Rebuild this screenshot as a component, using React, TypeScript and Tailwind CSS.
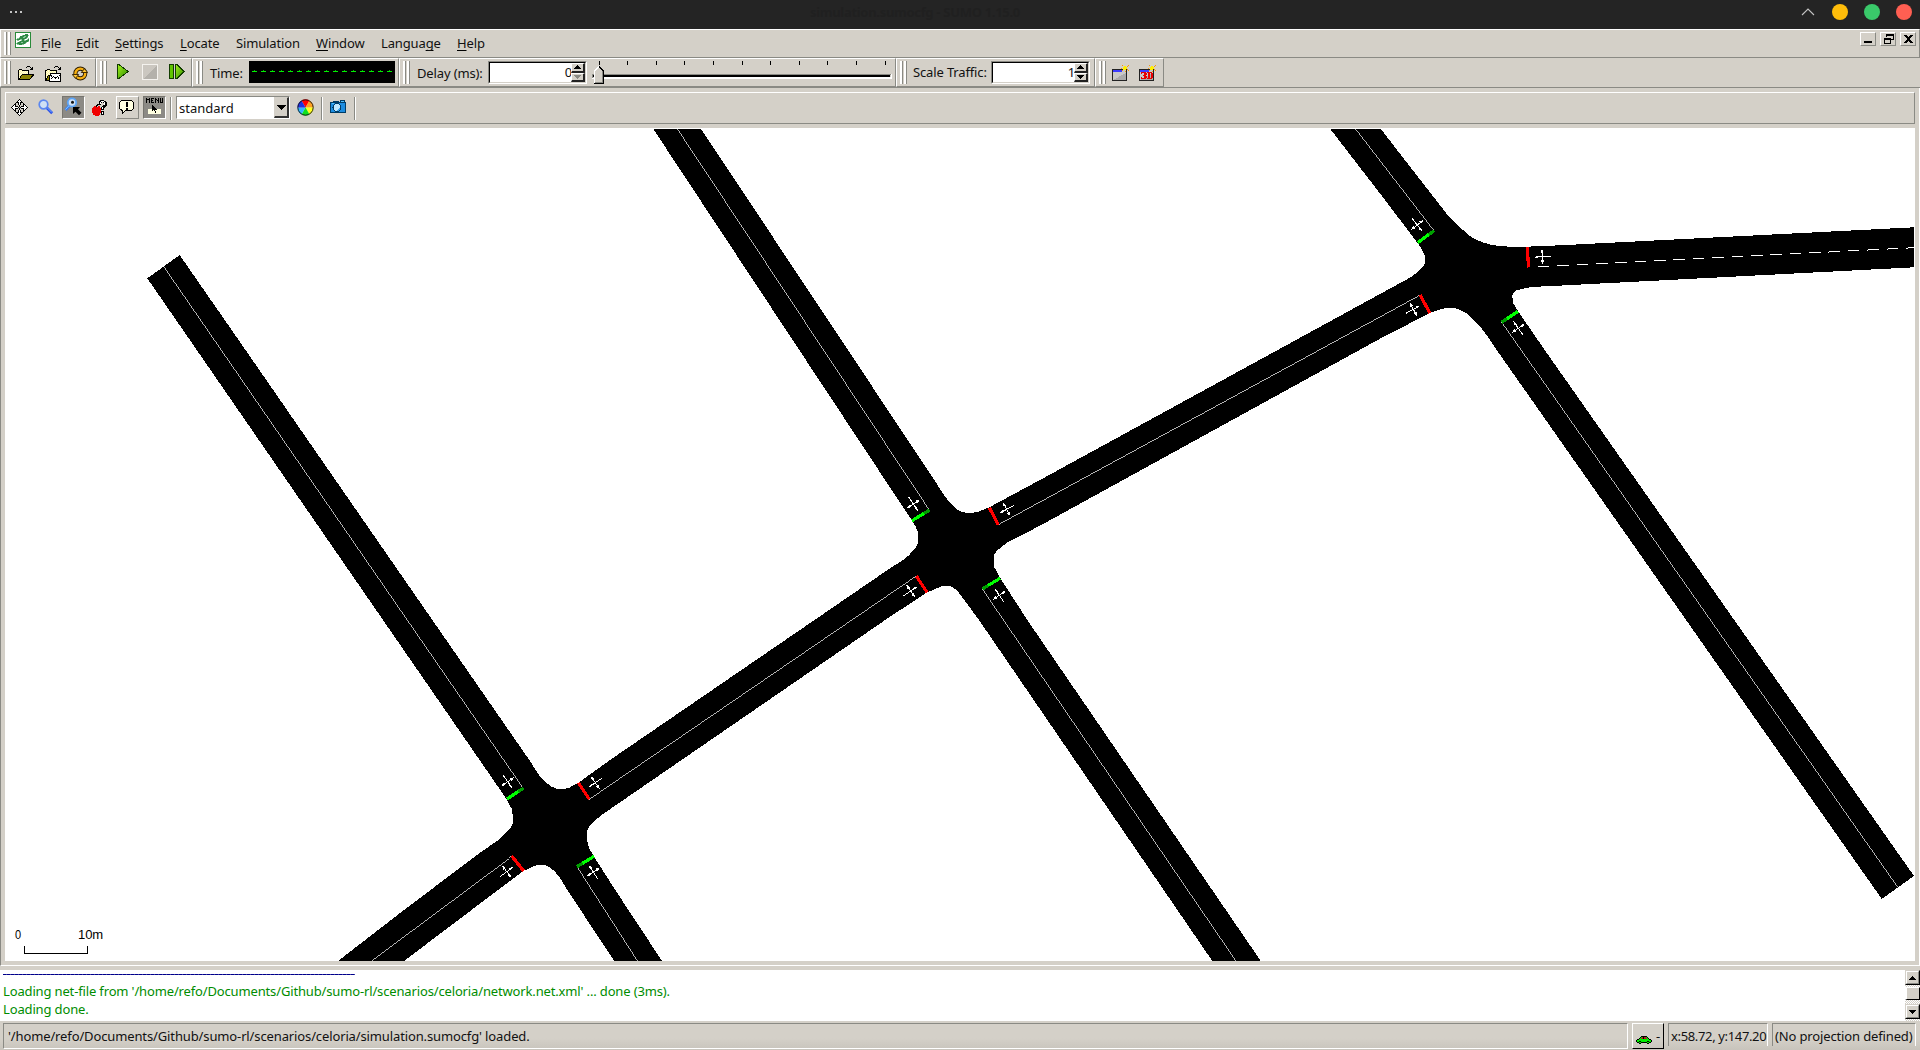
import React from "react";

type Pt = [number, number];

function Grip() {
  return (
    <div className="mt-[2px] ml-[3px] flex h-[23px] shrink-0 gap-[1px] self-start">
      <div className="w-[3px] border-l-2 border-r border-l-white border-r-[#8a8a84]" />
      <div className="w-[3px] border-l-2 border-r border-l-white border-r-[#8a8a84]" />
    </div>
  );
}

function Dock({ className, children }: { className: string; children: React.ReactNode }) {
  return (
    <div
      className={
        "flex h-[29px] shrink-0 border-t border-r border-b border-l border-t-white border-r-[#8a8a84] border-b-[#8a8a84] border-l-white " +
        className
      }
    >
      <Grip />
      {children}
    </div>
  );
}

function Icon({ className, children, w = 16, h = 16 }: { className?: string; children: React.ReactNode; w?: number; h?: number }) {
  return (
    <svg
      width={w}
      height={h}
      viewBox={`0 0 ${w} ${h}`}
      shapeRendering="crispEdges"
      className={"block shrink-0 " + (className ?? "")}
    >
      {children}
    </svg>
  );
}

function Pixels({ rows, colors }: { rows: string[]; colors: Record<string, string> }) {
  const out: React.ReactNode[] = [];
  rows.forEach((r, y) => {
    let x = 0;
    while (x < r.length) {
      const c = r[x];
      let n = 1;
      while (x + n < r.length && r[x + n] === c) n++;
      if (colors[c]) out.push(<rect key={`${x}-${y}`} x={x} y={y} width={n} height={1} fill={colors[c]} />);
      x += n;
    }
  });
  return <>{out}</>;
}

const folderColors = { k: "#000", y: "#fdf6a0", w: "#fffde0", o: "#8a8200" };

function OpenIcon() {
  return (
    <Icon>
      <Pixels
        colors={folderColors}
        rows={[
          ".........kkk....",
          "........k...k.k.",
          ".............kk.",
          ".kkk........kkk.",
          "kywykkkkkkk.....",
          "kwywywywywk.....",
          "kywywywywyk.....",
          "kwywywywywk.....",
          "kywykkkkkkkkkkkk",
          "kwykooooooooookk",
          "kykooooooooookk.",
          "kwkooooooooook..",
          "kkooooooooook...",
          "kkkkkkkkkkkk....",
        ]}
      />
    </Icon>
  );
}

function OpenNetIcon() {
  return (
    <Icon>
      <Pixels
        colors={{ ...folderColors, x: "#fff" }}
        rows={[
          "..........kkk...",
          ".........k...k.k",
          "..............kk",
          "..kkk........kkk",
          "kkywykkkkkkk....",
          "kwywywywywyk....",
          "kywywywywywk....",
          "kwywykkkkkkkkkkk",
          "kywywkxxxxxxxxxk",
          "kwykkkkxxxxxxxkk",
          "kykokxkxkxxxkxxk",
          "kwkokxxkxkkkxkxk",
          "kkookxkxxxkxxkxk",
          "kkookxxxxxxxxxxk",
          "kkkkkxxxxxxxxxxk",
          "....kkkkkkkkkkkk",
        ]}
      />
    </Icon>
  );
}

function ReloadIcon() {
  return (
    <svg width="16" height="16" viewBox="0 0 16 16" className="block shrink-0">
      <circle cx="8.300" cy="7.500" r="4.900" fill="none" stroke="#2c1c00" strokeWidth="4.200" />
      <circle cx="8.300" cy="7.500" r="4.900" fill="none" stroke="#f8b010" strokeWidth="2.400" />
      <path d="M0.300 8.500H6.700L3.500 12.300z" fill="#ffc838" stroke="#2c1c00" strokeWidth="0.900" />
      <path d="M9.300 6.500H15.700L12.500 2.700z" fill="#ffc838" stroke="#2c1c00" strokeWidth="0.900" />
    </svg>
  );
}

function PlayIcon() {
  return (
    <Icon w={12} h={16}>
      <defs>
        <linearGradient id="gplay" x1="0" y1="0" x2="1" y2="1">
          <stop offset="0" stopColor="#a4f41c" />
          <stop offset="1" stopColor="#2c8a00" />
        </linearGradient>
      </defs>
      <path d="M0.5 0.5 L2 0.5 L11 7.5 L2 14.5 L0.5 14.5z" fill="url(#gplay)" stroke="#123c00" />
    </Icon>
  );
}

function StepIcon() {
  return (
    <Icon>
      <path d="M0.5 0.5h4v14h-4z" fill="#5fc400" stroke="#123c00" />
      <path d="M6.5 0.5 L8 0.5 L15 7.5 L8 14.5 L6.5 14.5z" fill="url(#gplay)" stroke="#123c00" />
    </Icon>
  );
}

function StopIcon() {
  return (
    <Icon>
      <rect width="16" height="16" fill="#f4f2ee" />
      <rect x="1" y="1" width="14" height="14" fill="#b4b1ab" />
      <path d="M15 1L1 15V1z" fill="#cbc7c0" />
    </Icon>
  );
}

function WindowIcon({ three }: { three?: boolean }) {
  return (
    <Icon w={17} h={16}>
      <rect x="0" y="4" width="15" height="12" fill="#222" />
      <rect x="1" y="5" width="13" height="10" fill="#c8c8c8" />
      <rect x="1" y="5" width="9" height="2" fill="#3b3bff" />
      <path d="M1 15h13V8z" fill="#aaa" />
      {three && (
        <g transform="translate(2 7)">
          <Pixels
            colors={{ r: "#e80000" }}
            rows={["rrrrr.rrrrr", "r..rrr.rr.rr", "...rrr.rr.rr", "..rrr..rr.rr", "...rrr.rr.rr", "r..rrr.rr.rr", "rrrrr.rrrrr"]}
          />
        </g>
      )}
      <path d="M12 1h2v1h1v2h-1v1h-3V2h1z" fill="#ffee00" />
      <path d="M10 0h1v1h-1zM15 1h1v1h-1zM16 0h1v1h-1zM9 3h1v1H9zM15 4h1v1h-1zM13 6h1v1h-1zM16 5h1v1h-1zM10 5h1v1h-1z" fill="#ff9a00" />
    </Icon>
  );
}

function SpinArrow({ up, disabled }: { up?: boolean; disabled?: boolean }) {
  return (
    <div className="flex h-[10px] w-[14px] items-center justify-center border-t border-r-2 border-b-2 border-l border-t-white border-r-[#222] border-b-[#222] border-l-white bg-[#d4d0c8]">
      <svg width="7" height="4" viewBox="0 0 7 4" shapeRendering="crispEdges">
        <path d={up ? "M3 0h1v1h1v1h1v1h1v1H0V3h1V2h1V1h1z" : "M0 0h7v1H6v1H5v1H4v1H3V3H2V2H1V1H0z"} fill={disabled ? "#8a8a84" : "#000"} />
      </svg>
    </div>
  );
}

function Spinner({ value, disabledDown }: { value: string; disabledDown?: boolean }) {
  return (
    <div className="mt-[2px] flex h-[23px] w-[99px] shrink-0 border-t border-r border-b border-l border-t-[#8a8a84] border-r-white border-b-white border-l-[#8a8a84]">
      <div className="flex flex-1 border-t border-r border-b border-l border-t-black border-r-[#d4d0c8] border-b-[#d4d0c8] border-l-black bg-white">
        <div className="-mr-px flex-1 text-right leading-[19px]">{value}</div>
        <div className="flex flex-col">
          <SpinArrow up />
          <SpinArrow disabled={disabledDown} />
        </div>
      </div>
    </div>
  );
}

function Separator({ className }: { className: string }) {
  return <div className={"mt-[4px] h-[23px] w-[2px] shrink-0 border-r border-l border-r-white border-l-[#8a8a84] " + className} />;
}

const menus: { name: string; key: number; w: string }[] = [
  { name: "File", key: 0, w: "w-[35px]" },
  { name: "Edit", key: 0, w: "w-[39px]" },
  { name: "Settings", key: 0, w: "w-[65px]" },
  { name: "Locate", key: 0, w: "w-[56px]" },
  { name: "Simulation", key: -1, w: "w-[80px]" },
  { name: "Window", key: 0, w: "w-[65px]" },
  { name: "Language", key: 6, w: "w-[76px]" },
  { name: "Help", key: 0, w: "w-[40px]" },
];

function MenuLabel({ name, k }: { name: string; k: number }) {
  if (k < 0) return <>{name}</>;
  return (
    <>
      {name.slice(0, k)}
      <span className="underline decoration-black decoration-1 underline-offset-2 [text-decoration-skip-ink:none]">{name[k]}</span>
      {name.slice(k + 1)}
    </>
  );
}

function FrameButton({ children }: { children: React.ReactNode }) {
  return (
    <div className="h-[14px] w-[16px] border-t border-r border-b border-l border-t-white border-r-[#8a8a84] border-b-[#8a8a84] border-l-white">
      <svg width="14" height="12" viewBox="0 0 14 12" shapeRendering="crispEdges" className="block">
        {children}
      </svg>
    </div>
  );
}

/* Road surface and junction shapes as one outline, in window coordinates. */
const surface =
  "M147.3 278.3L179.7 255L529.3 760L540 776.7Q546 783 551.7 786.7Q556 789 560 789L568 788.3L577.7 783.3L610 760L890 568.3L903 560Q909 556 913 550.7Q918 546 918 541L917.7 531.7Q916 526 912 520.7L653.3 129L701.1 129L934.3 480L945 496.7Q952 505 958 510Q963 513 968 513L976.7 512.3L989.3 507.3L1040 480L1380 294L1411.7 276.7L1420 270Q1425 265 1425 261L1425 257Q1424 252 1417.3 242.7L1385 200L1330.3 129L1380.8 129L1436 200L1448.3 216L1468.3 235L1476.7 240Q1490 246 1506.7 246.5L1526.7 246.7L1560 245.3L1914 227.3L1914 267.3L1560 285.6L1543 286.3L1526.7 287.7L1515.7 290.7Q1512 293 1512.3 297L1513.3 303.3L1517.7 310.7L1544.7 350L1914 876L1881.8 899L1496.7 350L1486.7 335Q1480 326 1473.3 319.3Q1467 313 1461.7 310.7Q1457 308 1451.7 308L1441.7 308.7L1429.3 313.3L1380 338.7L1040 525.7L1006.7 542.7L996.7 551Q993.7 554 993.7 558.3L994.3 567.3L1000 577.7L1027.3 620L1260.8 961L1212.3 961L979 620L968 605L958 591.7Q953 587 950 586.3L941.7 586.3L927.3 592.3L890 616.7L620 802.3L601.7 815L591.7 823.3Q586.7 829 586.7 833L586.7 838L589 848L594 856.7L613.3 887L662 961L614.3 961L567.3 890L560 878Q555 871 550 867.3Q546 865 543 865L536.7 865L523.3 871L499.3 889L404 961L338 961L404 910L480 852.7L500 839L508 830.7Q513 825 513 821.7L512.3 810L506.7 799.3Z";

const centreLines: [Pt, Pt][] = [
  [[164, 267], [523, 788]],
  [[589.3, 799.3], [916.3, 576]],
  [[370.5, 961], [511.7, 856]],
  [[637.5, 961], [577, 866.7]],
  [[677.4, 129], [929.3, 510]],
  [[998.3, 524.7], [1420.3, 295]],
  [[1236, 961], [982.3, 589]],
  [[1355.6, 129], [1434, 230.7]],
  [[1897.6, 887], [1501.7, 322.3]],
];

const redBars: [Pt, Pt][] = [
  [[578.3, 782.7], [589.3, 799.3]],
  [[511.7, 856], [523.7, 871]],
  [[989.3, 507.7], [998.3, 524.7]],
  [[916.3, 576], [927, 592.3]],
  [[1527.3, 247], [1528.5, 267.5]],
  [[1420.3, 295], [1429.7, 313]],
];

/* Green bars run from the lane's outer edge to the road centre, where a darker piece closes them. */
const greenBars: [Pt, Pt][] = [
  [[507, 799], [523.7, 788]],
  [[594, 856.3], [577, 866.7]],
  [[912, 520.7], [929.7, 510]],
  [[1000, 578.3], [982.3, 589]],
  [[1417.7, 242.7], [1434, 230.7]],
  [[1518, 311.3], [1501.7, 322.3]],
];

const arrows: [number, number, number][] = [
  [507.7, 781.7, 55.4],
  [595.3, 782.7, 145.6],
  [506.7, 871.7, -36.6],
  [593.3, 872, -122.7],
  [913.3, 504, 56.6],
  [1006.7, 509.3, 151.4],
  [910.7, 591, -34.3],
  [999.3, 595.3, -124.4],
  [1417.3, 225, 52.3],
  [1542.3, 256.7, 177],
  [1413.3, 309.3, -28.5],
  [1518.3, 328.3, -125],
];

function Network() {
  return (
    <svg width="1910" height="833" viewBox="5 128 1910 833" shapeRendering="crispEdges" className="block">
      <path d={surface} fill="#000" />
      {centreLines.map(([a, b], i) => (
        <line key={i} x1={a[0]} y1={a[1]} x2={b[0]} y2={b[1]} stroke="#fff" strokeWidth="0.7" />
      ))}
      <line x1="1537.8" y1="266.7" x2="1914" y2="247.7" stroke="#fff" strokeDasharray="11.6 7.8" />
      {redBars.map(([a, b], i) => (
        <line key={i} x1={a[0]} y1={a[1]} x2={b[0]} y2={b[1]} stroke="#f00" strokeWidth="3.2" />
      ))}
      {greenBars.map(([a, b], i) => {
        const mx = a[0] + (b[0] - a[0]) * 0.68;
        const my = a[1] + (b[1] - a[1]) * 0.68;
        return (
          <g key={i} strokeWidth="3.2">
            <line x1={a[0]} y1={a[1]} x2={mx} y2={my} stroke="#0f0" />
            <line x1={mx} y1={my} x2={b[0]} y2={b[1]} stroke="#009e00" />
          </g>
        );
      })}
      {arrows.map(([x, y, r], i) => (
        <g key={i} transform={`translate(${x} ${y}) rotate(${r})`}>
          <path d="M-8.500 0H7M0 -6V6" stroke="#fff" strokeWidth="1" fill="none" />
          <path d="M8.500 0L4 -1.300V1.300zM0 -8L1.600 -3.500H-1.600zM0 8L1.600 3.500H-1.600z" fill="#fff" />
        </g>
      ))}
      <path d="M24.5 945.5V953.5H87.5V945.5" stroke="#000" fill="none" />
      <g fontFamily="'Liberation Sans', sans-serif" fontSize="13" fill="#000">
        <text x="15" y="939" textLength="6" lengthAdjust="spacingAndGlyphs">0</text>
        <text x="78" y="939" textLength="25" lengthAdjust="spacingAndGlyphs">10m</text>
      </g>
    </svg>
  );
}

function ScrollButton({ up }: { up?: boolean }) {
  return (
    <div className="flex h-[15px] w-[15px] items-center justify-center border-t border-r border-b border-l border-t-[#d4d0c8] border-r-black border-b-black border-l-[#d4d0c8] bg-[#d4d0c8]">
      <div className="flex h-[13px] w-[13px] items-center justify-center border-t border-r border-b border-l border-t-white border-r-[#8a8a84] border-b-[#8a8a84] border-l-white">
        <svg width="7" height="4" viewBox="0 0 7 4" shapeRendering="crispEdges">
          <path d={up ? "M3 0h1v1h1v1h1v1h1v1H0V3h1V2h1V1h1z" : "M0 0h7v1H6v1H5v1H4v1H3V3H2V2H1V1H0z"} />
        </svg>
      </div>
    </div>
  );
}

const checker = "bg-[repeating-conic-gradient(#d4d0c8_0_25%,#fff_0_50%)] bg-[length:2px_2px]";
const lcdDigits = Array.from({ length: 16 }, (_, i) => i);
const ticks = [599, 627, 656, 684, 713, 742, 770, 799, 827, 856, 885];

export default function App() {
  return (
    <div className="flex h-[1050px] w-[1920px] flex-col overflow-hidden bg-[#d4d0c8] font-['Noto_Sans',sans-serif] text-[13px] tracking-[-0.14px] text-[#111] select-none">
      {/* title bar */}
      <div className="flex h-[29px] shrink-0 bg-[#242424]">
        <div className="mt-[11px] ml-[10px] flex w-[800px] gap-[3px]">
          <div className="size-[2px] bg-[#c4c4c4]" />
          <div className="size-[2px] bg-[#c4c4c4]" />
          <div className="size-[2px] bg-[#c4c4c4]" />
        </div>
        <div className="flex-1 pt-[3px] text-[13px] leading-[19px] font-bold tracking-[-0.3px] text-[#202020]">simulation.sumocfg - SUMO 1.15.0</div>
        <div className="mt-[4px] mr-[8px] flex h-4 gap-4">
          <svg width="18" height="16" viewBox="0 0 18 16" className="mr-[4px]">
            <path d="M4 11L10 5L16 11" fill="none" stroke="#c4c4c4" strokeWidth="1.1" />
          </svg>
          <div className="-ml-[4px] size-4 rounded-full bg-[#ffbd0a]" />
          <div className="size-4 rounded-full bg-[#3ac96a]" />
          <div className="size-4 rounded-full bg-[#ff5f52]" />
        </div>
      </div>

      {/* menu bar */}
      <div className="flex h-[29px] shrink-0 border-t border-r border-b border-l border-t-white border-r-[#8a8a84] border-b-[#8a8a84] border-l-white">
        <Grip />
        <Icon className="mt-[2px] ml-[4px]">
          <rect x="0.5" y="0.5" width="15" height="15" fill="#fff" stroke="#2a8a3a" />
          <Pixels
            colors={{ g: "#2f8a45", l: "#8cc49a" }}
            rows={["", "", "..........ggg", ".......lgggggl", ".....ggggllgg", "....lgggllggl.", "..llgggggggl.l", ".lgggllggl..lg", "..ll..lggllggg", "....lggggggggl", "..lgggllgggl", ".lggggggggl", "..llgggll"]}
          />
        </Icon>
        <div className="ml-[10px] flex pt-[4px] leading-[19px]">
          {menus.map((m) => (
            <div key={m.name} className={"shrink-0 whitespace-nowrap " + m.w}>
              <MenuLabel name={m.name} k={m.key} />
            </div>
          ))}
        </div>
        <div className="mt-[2px] mr-[3px] ml-auto flex gap-1">
          <FrameButton>
            <rect x="3" y="8" width="8" height="2" />
          </FrameButton>
          <FrameButton>
            <path d="M5 1h8v6h-3V6h2V3H6v1H5zM3 5h7v6H3zM4 7v3h5V7z" fillRule="evenodd" />
          </FrameButton>
          <FrameButton>
            <path d="M3 2h3v1h1v1h1V3h1V2h3v1h-1v1h-1v1H9v2h1v1h1v1h1v1H9V9H8V8H7v1H6v1H3V9h1V8h1V7h1V5H5V4H4V3H3z" />
          </FrameButton>
        </div>
      </div>

      {/* tool bars */}
      <div className="flex h-[30px] shrink-0 border-b border-[#8a8a84]">
        <Dock className="w-[96px]">
          <div className="mt-[7px] ml-[7px] flex gap-[11px]">
            <OpenIcon />
            <OpenNetIcon />
            <ReloadIcon />
          </div>
        </Dock>
        <Dock className="w-[96px]">
          <div className="mt-[5px] ml-[10px] flex">
            <PlayIcon />
            <div className="ml-[13px]">
              <StopIcon />
            </div>
            <div className="ml-[11px]">
              <StepIcon />
            </div>
          </div>
        </Dock>
        <Dock className="w-[207px]">
          <div className="mt-[5px] ml-[7px] w-[39px] leading-[19px]">Time:</div>
          <div className="mt-[2px] flex h-[22px] w-[146px] justify-center gap-[4px] bg-black pt-[9px]">
            {lcdDigits.map((i) => (
              <div key={i} className="flex h-[2px] w-[5px] flex-col items-center">
                <div className="h-px w-[1px] bg-[#00b000]" />
                <div className="h-px w-[5px] bg-[#00f000]" />
              </div>
            ))}
          </div>
        </Dock>
        <Dock className="w-[497px]">
          <div className="mt-[5px] ml-[7px] w-[71px] shrink-0 leading-[19px]">Delay (ms):</div>
          <Spinner value="0" disabledDown />
          <svg width="305" height="27" viewBox="587 59 305 27" shapeRendering="crispEdges" overflow="visible" className="block shrink-0">
            {ticks.map((t) => (
              <rect key={t} x={t} y="61" width="1" height="4" />
            ))}
            <rect x="592" y="74" width="300" height="5" fill="#fff" />
            <rect x="592" y="74" width="299" height="4" fill="#8a8a84" />
            <rect x="593" y="75" width="298" height="3" fill="#d4d0c8" />
            <rect x="593" y="75" width="297" height="2" fill="#000" />
            <rect x="594" y="77" width="297" height="1" fill="#fff" />
            <path d="M594 84V71L599 66L604 71V84z" fill="#d4d0c8" />
            <path d="M594.5 83V71L599 66.5" stroke="#fff" fill="none" />
            <path d="M599 66.5L603.5 71V83.5H594" stroke="#000" fill="none" />
            <path d="M602.5 71V82.5H595" stroke="#8a8a84" fill="none" />
          </svg>
        </Dock>
        <Dock className="w-[199px]">
          <div className="mt-[4px] ml-[6px] w-[78px] shrink-0 leading-[19px] whitespace-nowrap">Scale Traffic:</div>
          <Spinner value="1" />
        </Dock>
        <Dock className="w-[69px]">
          <div className="mt-[6px] ml-[6px] flex gap-[10px]">
            <WindowIcon />
            <WindowIcon three />
          </div>
        </Dock>
      </div>

      {/* view frame */}
      <div className="flex h-[878px] shrink-0 flex-col border-r border-b border-l border-r-white border-b-white border-l-[#8a8a84] pt-[4px] pl-[4px]">
        <div className="flex h-[32px] w-[1910px] border-t border-r border-b border-l border-t-white border-r-[#8a8a84] border-b-[#8a8a84] border-l-white">
          <svg width="17" height="17" viewBox="0 0 17 17" shapeRendering="crispEdges" className="mt-[6px] ml-[5px] shrink-0">
            <Pixels
              colors={{ k: "#000", w: "#fff" }}
              rows={[
                "........k........",
                ".......kwk.......",
                "......kwwwk......",
                ".....kkkwkkk.....",
                "....k..kwk..k....",
                "...kk..kwk..kk...",
                "..kwk...k...kwk..",
                ".kwwkkk.k.kkkwwk.",
                "kwwwwwwk.kwwwwwwk",
                ".kwwkkk.k.kkkwwk.",
                "..kwk...k...kwk..",
                "...kk..kwk..kk...",
                "....k..kwk..k....",
                ".....kkkwkkk.....",
                "......kwwwk......",
                ".......kwk.......",
                "........k........",
              ]}
            />
          </svg>
          <svg width="16" height="16" viewBox="0 0 16 16" className="mt-[6px] ml-[10px] shrink-0">
            <path d="M8.5 8.5L14.2 14.2" stroke="#2b50e8" strokeWidth="2.8" />
            <path d="M9 8.5L14 13.5" stroke="#79b4ff" strokeWidth="1" />
            <circle cx="5.5" cy="5.5" r="4.3" fill="#cfe0f4" stroke="#5b87f0" strokeWidth="1.7" />
          </svg>
          <div className="mt-[3px] ml-[8px] h-[23px] w-[23px] shrink-0 border-t border-r border-b border-l border-t-[#77756f] border-r-white border-b-white border-l-[#77756f] bg-[#8c8a85]">
            <svg width="21" height="21" viewBox="0 0 21 21" className="block">
              <path d="M6.500 8.500L2.500 13" stroke="#3f7cf0" strokeWidth="2.800" />
              <path d="M6.500 8.200L2.500 12.500" stroke="#7fd0ff" strokeWidth="1" />
              <circle cx="9" cy="5.500" r="4.200" fill="#cfe0f4" stroke="#5ba4f8" strokeWidth="1.800" />
              <circle cx="9.500" cy="5.200" r="1.500" fill="#111" />
              <path d="M10 10h7l-2 2.200 3.500 3.500-2.500 2.500-3.500-3.500-2.500 2.300z" fill="#000" />
            </svg>
          </div>
          <svg width="16" height="17" viewBox="0 0 16 17" shapeRendering="crispEdges" className="mt-[6px] ml-[7px] shrink-0">
            <path d="M2 7h2v1h2V7h2v2h1v5H8v2H7v1H3v-1H1v-2H0V9h1V8h1z" fill="#f00000" />
            <path d="M4.500 8V6.500H5.500V5.500H7" stroke="#000" fill="none" />
            <path d="M7 3V2h1V1h4v1h2v1h1v4h-1v1h-1v1h-1v2H9V8h1V7h1V6h1V4h-1V3h-1v1H9v2H7z" fill="#000" />
            <path d="M9 12h3v4H9z" fill="#000" />
            <path d="M10 13h1v2h-1zM10 8h1v2h-1zM12 3h1v3h-1zM8 3h1v2H8zM9 2h3v1H9z" fill="#fff" />
          </svg>
          <div className="mt-[3px] ml-[8px] h-[23px] w-[23px] shrink-0 border-t border-r border-b border-l border-t-white border-r-[#8a8a84] border-b-[#8a8a84] border-l-white">
            <svg width="21" height="21" viewBox="0 0 21 21" shapeRendering="crispEdges" className="block">
              <path d="M4.500 3.500H14.500L16.500 5.500V11.500L14.500 13.500H8.500L5 16.500V13.500L2.500 11.500V5.500z" fill="#ffffe1" stroke="#000" />
              <path d="M9 5h2v5H9zM9 11h2v2H9z" />
            </svg>
          </div>
          <div className="mt-[3px] ml-[4px] h-[23px] w-[23px] shrink-0 border-t border-r border-b border-l border-t-[#77756f] border-r-white border-b-white border-l-[#77756f] bg-[#8c8a85]">
            <svg width="21" height="21" viewBox="0 0 21 21" shapeRendering="crispEdges" className="block">
              <g transform="translate(2 1)">
                <Pixels colors={{ k: "#000" }} rows={["k..k.kkk.k..k.k.k", "kkkk.k...kk.k.k.k", "k..k.kk..k.kk.k.k", "k..k.k...k..k.k.k", "k..k.kkk.k..k.kkk"]} />
              </g>
              <rect x="4" y="12" width="13" height="5" fill="#ffffe1" />
              <path d="M8 8h1v1h1v1h1v1h1v1h1v1h-2v1h1v2h-1v-2h-1v-1H9v1H8z" fill="#000" />
            </svg>
          </div>
          <Separator className="ml-[4px]" />
          <div className="mt-[3px] ml-[4px] flex h-[23px] w-[114px] shrink-0 border-t border-r border-b border-l border-t-[#8a8a84] border-r-white border-b-white border-l-[#8a8a84] bg-white">
            <div className="flex-1 pt-[2px] pl-[2px] leading-[19px] tracking-normal">standard</div>
            <div className="flex h-[21px] w-[15px] items-center justify-center border-t border-r-2 border-b-2 border-l border-t-[#d4d0c8] border-r-[#333] border-b-[#333] border-l-[#d4d0c8] bg-[#d4d0c8]">
              <svg width="9" height="5" viewBox="0 0 9 5" shapeRendering="crispEdges">
                <path d="M0 0h9v1H8v1H7v1H6v1H5v1H4V4H3V3H2V2H1V1H0z" />
              </svg>
            </div>
          </div>
          <svg width="17" height="17" viewBox="-8.5 -8.5 17 17" className="mt-[6px] ml-[7px] shrink-0">
            <path d="M0 0L-4 -7A8 8 0 0 1 4 -7z" fill="#ff0000" />
            <path d="M0 0L4 -7A8 8 0 0 1 8 0z" fill="#ffa020" />
            <path d="M0 0L8 0A8 8 0 0 1 4 7z" fill="#ffff20" />
            <path d="M0 0L4 7A8 8 0 0 1 -4 7z" fill="#10e020" />
            <path d="M0 0L-4 7A8 8 0 0 1 -8 0z" fill="#30b8ff" />
            <path d="M0 0L-8 0A8 8 0 0 1 -4 -7z" fill="#2030e0" />
            <circle r="7.700" fill="none" stroke="#111" strokeWidth="0.9" />
          </svg>
          <Separator className="ml-[7px]" />
          <svg width="16" height="14" viewBox="0 0 16 14" shapeRendering="crispEdges" className="mt-[7px] ml-[7px] shrink-0">
            <path d="M0 2h3V1h6v1h1V0h5v2h1v11H0z" fill="#003c66" />
            <path d="M1 3h14v9H1z" fill="#1c8ce0" />
            <path d="M11 1h3v1h-3zM2 3h2v1H2z" fill="#50c0ff" />
            <circle cx="7" cy="7.500" r="4.500" fill="#003c66" />
            <circle cx="7" cy="7.500" r="3.400" fill="#bfe8ff" />
            <path d="M7 11a3.400 3.400 0 0 0 3.400-4z" fill="#40a8f0" />
          </svg>
          <Separator className="ml-[8px]" />
        </div>
        <div className="mt-[4px] h-[833px] w-[1910px] bg-white">
          <Network />
        </div>
      </div>

      {/* message log */}
      <div className="mt-[4px] flex h-[51px] shrink-0 bg-white">
        <div className="flex-1 overflow-hidden pl-[3px] whitespace-nowrap text-[#008c00]">
          <div className="mt-[4px] mb-[8px] h-px w-[352px] bg-[repeating-linear-gradient(90deg,#00008b_0_3px,#3a3aa4_3px_4px)]" />
          <div className="-mt-[1px] h-[18px] leading-[18px] tracking-[-0.147px]">Loading net-file from '/home/refo/Documents/Github/sumo-rl/scenarios/celoria/network.net.xml' ... done (3ms).</div>
          <div className="h-[18px] leading-[18px]">Loading done.</div>
        </div>
        <div className={"flex w-[15px] flex-col " + checker}>
          <ScrollButton up />
          <div className="mt-[2px] mb-[4px] h-[13px] border-t border-r border-b border-l-2 border-t-white border-r-black border-b-black border-l-white bg-[#d4d0c8]" />
          <ScrollButton />
        </div>
      </div>

      {/* status bar */}
      <div className="flex h-[29px] shrink-0 bg-linear-to-b from-[#d4d0c8] from-60% to-[#c8c4bc] pt-[2px] pl-[3px]">
        <div className="h-[26px] w-[1625px] border-t border-r border-b border-l border-t-[#8a8a84] border-r-white border-b-white border-l-[#8a8a84] pt-[3px] pl-[4px] leading-[19px] tracking-[-0.125px]">
          '/home/refo/Documents/Github/sumo-rl/scenarios/celoria/simulation.sumocfg' loaded.
        </div>
        <div className="ml-[4px] flex h-[26px] w-[32px] border-t border-r border-b border-l border-t-white border-r-black border-b-black border-l-white">
          <svg width="16" height="8" viewBox="0 0 16 8" shapeRendering="crispEdges" className="mt-[12px] ml-[3px] shrink-0">
            <Pixels
              colors={{ k: "#000", g: "#00f000", r: "#b02020" }}
              rows={[
                ".....kkkkkk.....",
                "....kgrkrrgk....",
                "...kgrrkrrrgk...",
                ".kkggggggggggkk.",
                "kggggggggggggggk",
                "kggkkggggggkkggk",
                ".kkggkkkkkkggkk.",
                "...kk......kk...",
              ]}
            />
          </svg>
          <div className="pt-[3px] pl-[4px] leading-[19px]">-</div>
        </div>
        <div className="ml-[4px] h-[23px] w-[100px] border-t border-r border-l border-t-[#8a8a84] border-r-white border-l-[#8a8a84] pt-[3px] pl-[2px] leading-[19px] tracking-[-0.35px] whitespace-nowrap">
          x:58.72, y:147.20
        </div>
        <div className="ml-[4px] h-[23px] w-[144px] border-t border-r border-l border-t-[#8a8a84] border-r-white border-l-[#8a8a84] pt-[3px] pl-[2px] leading-[19px] tracking-[-0.14px] whitespace-nowrap">
          (No projection defined)
        </div>
      </div>
    </div>
  );
}
